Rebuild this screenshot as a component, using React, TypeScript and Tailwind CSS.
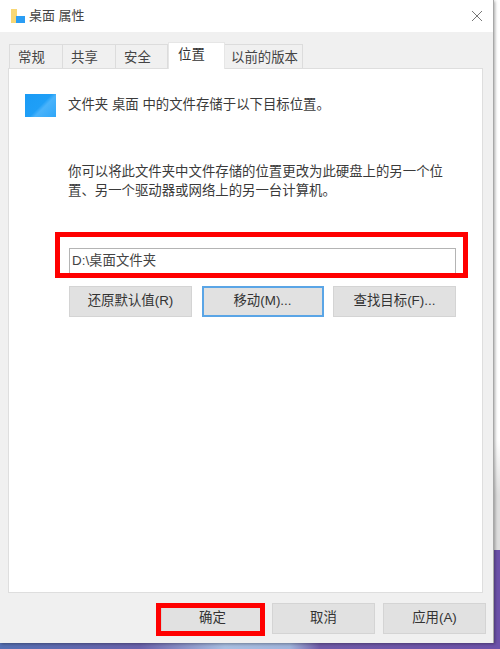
const font = { fontFamily: '"Liberation Sans", "Noto Sans CJK SC", sans-serif' };

function Tab({ label, active, cls }: { label: string; active?: boolean; cls: string }) {
  return active ? (
    <div className={`${cls} h-[27px] -mb-px relative z-10 bg-white border border-[#e6e6e6] border-b-0 flex items-start pt-[2px] text-[13.4px] text-[#333]`}>
      {label}
    </div>
  ) : (
    <div className={`${cls} h-[24px] bg-[#f0f0f0] border-t border-r border-[#dcdcdc] flex items-start pt-[3px] text-[13.4px] text-[#444]`}>
      {label}
    </div>
  );
}

function Btn({ label, w, focus }: { label: string; w: string; focus?: boolean }) {
  return (
    <div className={`${w} h-[31px] bg-[#e1e1e1] border flex items-center justify-center text-[13.4px] text-[#333] ${focus ? "border-[#5aa5e6] ring-1 ring-inset ring-[#5aa5e6]" : "border-[#d4d4d4]"}`}>
      {label}
    </div>
  );
}

export default function App() {
  return (
    <div style={font} className="relative w-[500px] h-[649px] overflow-hidden text-[13.4px] text-[#3a3a3a] bg-[linear-gradient(90deg,#5670b4_0%,#6a62ac_28%,#a9bfe2_45%,#a0b4dc_58%,#6f5aa8_64%,#6d52aa_100%)]">
      <div className="absolute right-0 top-0 w-[6px] h-[550px] bg-[linear-gradient(180deg,#ffffff_0%,#ffffff_80%,#dedede_90%,#dedede_100%)]" />
      <div className="relative w-[494px] h-[643px] flex flex-col bg-[#f0f0f0] border-r border-[#a8a8a8] shadow-[1px_1px_3px_rgba(0,0,0,0.35)]">
        <div className="h-[32px] shrink-0 bg-white flex items-center pl-[11px] pr-[10px]">
          <svg width="15" height="15" viewBox="0 0 15 15" className="shrink-0">
            <rect x="0" y="0" width="6" height="14" fill="#f8d775" />
            <rect x="5" y="7" width="9" height="7" fill="#2a9df4" />
          </svg>
          <span className="ml-[3px] text-[13px] text-[#444]">桌面 属性</span>
          <svg width="12" height="12" viewBox="0 0 12 12" className="ml-auto" stroke="#777" strokeWidth="1" fill="none">
            <path d="M1 1 L11 11 M11 1 L1 11" />
          </svg>
        </div>
        <div className="flex-1 flex flex-col pl-[8px] pr-[7px] pt-[10px] min-h-0">
          <div className="flex h-[26px] pl-[1px] shrink-0 items-end">
            <Tab label="常规" cls="w-[54px] border-l pl-[8px]" />
            <Tab label="共享" cls="w-[53px] pl-[8px]" />
            <Tab label="安全" cls="w-[52px] pl-[8px]" />
            <Tab label="位置" active cls="w-[57px] pl-[9px]" />
            <Tab label="以前的版本" cls="w-[78px] pl-[6px]" />
          </div>
          <div className="w-[475px] h-[525px] shrink-0 bg-white border border-[#dedede] flex flex-col pl-[16px] pr-[26px]">
            <div className="flex items-center h-[26px] mt-[23px]">
              <div className="w-[31px] h-[23px] bg-[linear-gradient(135deg,#1a9bf5_0%,#1f9ff7_50%,#4ab3fb_60%,#2ea6f8_100%)]" />
              <span className="ml-[12px]">文件夹 桌面 中的文件存储于以下目标位置。</span>
            </div>
            <p className="mt-[44px] ml-[43px] leading-[19px] whitespace-nowrap">
              你可以将此文件夹中文件存储的位置更改为此硬盘上的另一个位<br />置、另一个驱动器或网络上的另一台计算机。
            </p>
            <div className="mt-[48px] ml-[44px] h-[26px] border border-[#b4b4b4] bg-white flex items-center pl-[2px] text-[#444]">
              D:\桌面文件夹
            </div>
            <div className="flex justify-between mt-[12px] ml-[44px]">
              <Btn label="还原默认值(R)" w="w-[123px]" />
              <Btn label="移动(M)..." w="w-[122px]" focus />
              <Btn label="查找目标(F)..." w="w-[123px]" />
            </div>
          </div>
          <div className="flex justify-end gap-[8px] mt-[10px]">
            <Btn label="确定" w="w-[103px]" />
            <Btn label="取消" w="w-[103px]" />
            <Btn label="应用(A)" w="w-[103px]" />
          </div>
        </div>
      </div>
      <div className="absolute left-[55px] top-[232px] w-[413px] h-[46px] border-[5px] border-[#ff0000]" />
      <div className="absolute left-[156px] top-[603px] w-[109px] h-[33px] border-[5px] border-[#ff0000]" />
    </div>
  );
}
